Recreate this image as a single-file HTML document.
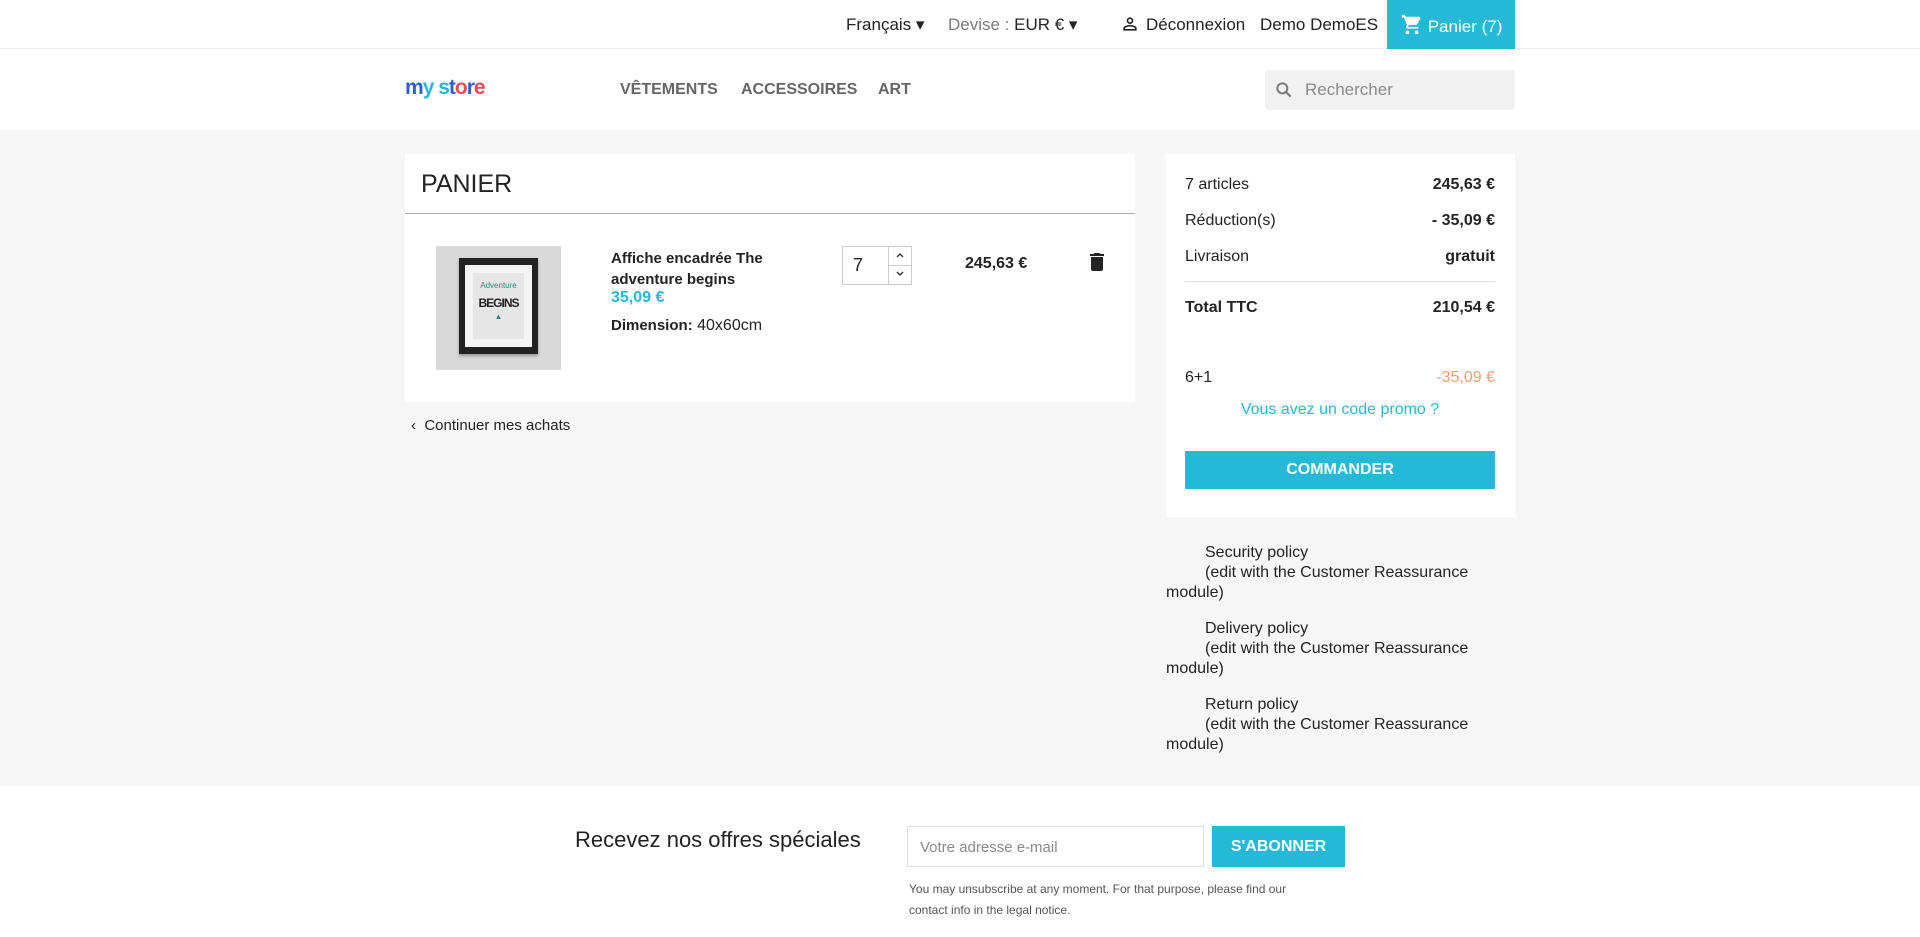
<!DOCTYPE html>
<html><head><meta charset="utf-8"><style>
*{box-sizing:border-box;margin:0;padding:0}
body{width:1920px;height:937px;overflow:hidden;background:#fff;font-family:"Liberation Sans",sans-serif;color:#232323;font-size:16px;position:relative}
.a{position:absolute;white-space:nowrap}
.b{font-weight:bold}
.cy{color:#24b9d7}
</style></head><body>
<div class="a" style="left:0;top:0;width:1920px;height:49px;border-bottom:1px solid #eee"></div>
<div class="a" style="left:846px;top:15px;font-size:17px">Français ▾</div>
<div class="a" style="left:948px;top:15px;font-size:17px;color:#7a7a7a">Devise : <span style="color:#232323">EUR € ▾</span></div>
<svg class="a" style="left:1120px;top:14px" width="20" height="20" viewBox="0 0 24 24"><path fill="#232323" d="M12 4a4 4 0 110 8 4 4 0 010-8zm0 2a2 2 0 100 4 2 2 0 000-4zm0 7c2.7 0 8 1.3 8 4v3H4v-3c0-2.7 5.3-4 8-4zm0 2c-3 0-6 1.5-6 2v1h12v-1c0-.5-3-2-6-2z"/></svg>
<div class="a" style="left:1146px;top:15px;font-size:17px">Déconnexion</div>
<div class="a" style="left:1260px;top:15px;font-size:17px">Demo DemoES</div>
<div class="a" style="left:1387px;top:0;width:128px;height:49px;background:#24b9d7;color:#fff;font-size:17px;padding:14px 0 0 14px"><svg style="vertical-align:-4px" width="22" height="22" viewBox="0 0 24 24"><path fill="#fff" d="M7 18a2 2 0 100 4 2 2 0 000-4zM1 2v2h2l3.6 7.6-1.4 2.4C5 14.6 5.6 16 7 16h12v-2H7.4l1.1-2h7.5c.8 0 1.4-.4 1.7-1l3.6-6.5L19.6 3H5.2l-.9-2H1zm16 16a2 2 0 100 4 2 2 0 000-4z"/></svg> Panier (7)</div>
<div class="a" style="left:0;top:49px;width:1920px;height:81px;box-shadow:0 2px 4px rgba(0,0,0,.1);background:#fff"></div>
<div class="a b" style="left:405px;top:76px;font-size:21px;letter-spacing:-1px"><span style="color:#2f5fd0">m</span><span style="color:#24b9d7">y</span> <span style="color:#24b9d7">s</span><span style="color:#2f5fd0">t</span><span style="color:#e94b5a">o</span><span style="color:#2f5fd0">r</span><span style="color:#e94b5a">e</span></div>
<div class="a b" style="left:620px;top:81px;font-size:16px;color:#666">VÊTEMENTS</div>
<div class="a b" style="left:741px;top:81px;font-size:16px;color:#666">ACCESSOIRES</div>
<div class="a b" style="left:878px;top:81px;font-size:16px;color:#666">ART</div>
<div class="a" style="left:1265px;top:70px;width:250px;height:40px;background:#f1f1f1;border-radius:4px"></div>
<svg class="a" style="left:1274px;top:80px" width="20" height="20" viewBox="0 0 24 24"><circle cx="10" cy="10" r="6" stroke="#7a7a7a" stroke-width="2.4" fill="none"/><path d="M14.5 14.5L20 20" stroke="#7a7a7a" stroke-width="2.6"/></svg>
<div class="a" style="left:1305px;top:80px;font-size:17px;color:#8a8a8a">Rechercher</div>
<div class="a" style="left:0;top:130px;width:1920px;height:656px;background:#f6f6f6"></div>
<div class="a" style="left:405px;top:154px;width:730px;height:248px;background:#fff"></div>
<div class="a" style="left:421px;top:170px;font-size:25px">PANIER</div>
<div class="a" style="left:405px;top:213px;width:730px;height:1px;background:#aaa"></div>
<div class="a" style="left:436px;top:246px;width:125px;height:124px;background:#d9d9d9"></div>
<div class="a" style="left:459px;top:258px;width:79px;height:96px;background:#222;box-shadow:0 2px 3px rgba(0,0,0,.3)"></div>
<div class="a" style="left:465px;top:265px;width:67px;height:82px;background:#f4f4f4"></div>
<div class="a" style="left:473px;top:273px;width:51px;height:66px;background:#e6e6e6;text-align:center;font-size:8px;color:#2a8a7a;padding-top:8px">Adventure<div style="color:#222;font-weight:bold;font-size:12px;letter-spacing:-1px;margin-top:6px">BEGINS</div><div style="margin-top:2px">▲</div></div>
<div class="a b" style="left:611px;top:248px;font-size:15px;line-height:21px">Affiche encadrée The<br>adventure begins</div>
<div class="a b cy" style="left:611px;top:289px;font-size:16px">35,09 €</div>
<div class="a" style="left:611px;top:317px;font-size:16px"><b style="font-size:15px">Dimension:</b> 40x60cm</div>
<div class="a" style="left:842px;top:246px;width:70px;height:39px;border:1px solid #ccc;background:#fff"></div>
<div class="a" style="left:888px;top:246px;width:1px;height:39px;background:#ccc"></div>
<div class="a" style="left:888px;top:265px;width:24px;height:1px;background:#ccc"></div>
<div class="a" style="left:853px;top:255px;font-size:18px">7</div>
<svg class="a" style="left:895px;top:251px" width="10" height="8" viewBox="0 0 10 8"><path d="M2 6l3-3 3 3" stroke="#333" stroke-width="1.4" fill="none"/></svg>
<svg class="a" style="left:895px;top:270px" width="10" height="8" viewBox="0 0 10 8"><path d="M2 2l3 3 3-3" stroke="#333" stroke-width="1.4" fill="none"/></svg>
<div class="a b" style="left:965px;top:255px;font-size:16px">245,63 €</div>
<svg class="a" style="left:1090px;top:253px" width="14" height="18" viewBox="0 0 14 18"><path fill="#232323" d="M1 16c0 1.1.9 2 2 2h8c1.1 0 2-.9 2-2V4H1v12zM14 1h-3.5l-1-1h-5l-1 1H0v2h14V1z"/></svg>
<div class="a" style="left:411px;top:417px;font-size:15px">‹&nbsp; Continuer mes achats</div>
<div class="a" style="left:1166px;top:154px;width:349px;height:363px;background:#fff"></div>
<div class="a" style="left:1185px;top:175px;width:310px;font-size:16px;line-height:20px">
<div style="display:flex;justify-content:space-between;height:36px"><span>7 articles</span><b>245,63 €</b></div>
<div style="display:flex;justify-content:space-between;height:36px"><span>Réduction(s)</span><b>- 35,09 €</b></div>
<div style="display:flex;justify-content:space-between;height:34px"><span>Livraison</span><b>gratuit</b></div>
<div style="height:1px;background:#ddd;margin-bottom:16px"></div>
<div style="display:flex;justify-content:space-between"><b>Total TTC</b><b>210,54 €</b></div>
<div style="display:flex;justify-content:space-between;margin-top:50px"><span>6+1</span><span style="color:#f39d72">-35,09 €</span></div>
<div class="cy" style="text-align:center;margin-top:12px;font-size:16px">Vous avez un code promo ?</div>
</div>
<div class="a b" style="left:1185px;top:451px;width:310px;height:38px;background:#24b9d7;color:#fff;text-align:center;line-height:38px;font-size:16px">COMMANDER</div>
<div class="a" style="left:1166px;top:543px;font-size:16px;line-height:20px;white-space:normal;width:330px">
<div style="padding-left:39px">Security policy<br>(edit with the Customer Reassurance</div>module)
<div style="padding-left:39px;margin-top:16px">Delivery policy<br>(edit with the Customer Reassurance</div>module)
<div style="padding-left:39px;margin-top:16px">Return policy<br>(edit with the Customer Reassurance</div>module)
</div>
<div class="a" style="left:575px;top:827px;font-size:22px">Recevez nos offres spéciales</div>
<div class="a" style="left:907px;top:826px;width:297px;height:41px;border:1px solid #ddd;font-size:15px;color:#8a8a8a;padding:12px 12px">Votre adresse e-mail</div>
<div class="a b" style="left:1212px;top:826px;width:133px;height:41px;background:#24b9d7;color:#fff;text-align:center;line-height:41px;font-size:16px">S'ABONNER</div>
<div class="a" style="left:909px;top:879px;font-size:12px;line-height:21px;color:#555">You may unsubscribe at any moment. For that purpose, please find our<br>contact info in the legal notice.</div>
</body></html>
